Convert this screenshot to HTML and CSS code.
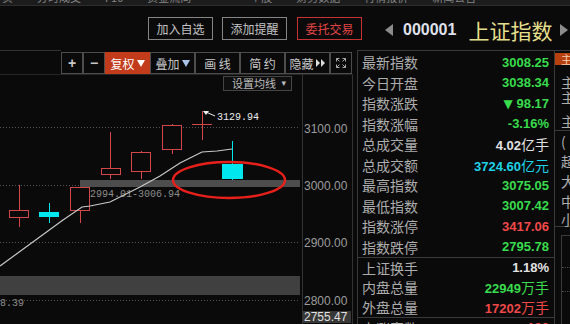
FILE: index.html
```html
<!DOCTYPE html>
<html>
<head>
    <meta charset="utf-8">
    <title>上证指数</title>
    <link rel="stylesheet" href="styles.css">
</head>
<body>
    <div class="topbar">
        <span>页</span>
        <span>分时成交</span>
        <span>F10</span>
        <span>资金流向</span>
        <span>·</span>
        <span>个股</span>
        <span>财务数据</span>
        <span>行情报价</span>
        <span>新闻公告</span>
    </div>

    <div class="header">
        <div class="btn">加入自选</div>
        <div class="btn">添加提醒</div>
        <div class="btn trade">委托交易</div>
        <div class="stock">
            <span class="arrow-left"></span>
            <span class="code">000001</span>
            <span class="name">上证指数</span>
            <span class="arrow-right"></span>
        </div>
    </div>

    <div class="main">
        <div class="chart">
            <div class="toolbar">
                <div class="toolbar-line"></div>
                <div class="tools">
                    <div class="tool sq">+</div>
                    <div class="tool sq">−</div>
                    <div class="tool active">复权
                        <svg width="8" height="7" viewBox="0 0 8 7"><polygon points="0,0 8,0 4,7" fill="#fff"/></svg>
                    </div>
                    <div class="tool">叠加
                        <svg width="8" height="7" viewBox="0 0 8 7"><polygon points="0,0 8,0 4,7" fill="#a9c3ea"/></svg>
                    </div>
                    <div class="tool">画 线</div>
                    <div class="tool">简 约</div>
                    <div class="tool">隐藏
                        <svg width="10" height="8" viewBox="0 0 10 8"><polygon points="0,0 4,4 0,8" fill="#ddd"/><polygon points="5,0 9,4 5,8" fill="#ddd"/></svg>
                    </div>
                    <div class="tool sq">
                        <svg width="12" height="12" viewBox="0 0 12 12" fill="none" stroke="#a8a8a8" stroke-width="1">
                            <path d="M1.5 4.5v-3h3M1.5 1.5l3 3"/>
                            <path d="M10.5 4.5v-3h-3M10.5 1.5l-3 3"/>
                            <path d="M1.5 7.5v3h3M1.5 10.5l3-3"/>
                            <path d="M10.5 7.5v3h-3M10.5 10.5l-3-3"/>
                        </svg>
                    </div>
                </div>
            </div>

            <div class="chart-body">
                <div class="plot">
                    <svg class="canvas" width="302" height="248" viewBox="0 76 302 248">
                        <g stroke="#555" stroke-dasharray="1 2">
                            <line x1="0" y1="128.5" x2="299" y2="128.5"/>
                            <line x1="0" y1="186.5" x2="299" y2="186.5"/>
                            <line x1="0" y1="243.5" x2="299" y2="243.5"/>
                            <line x1="0" y1="301.5" x2="299" y2="301.5"/>
                        </g>
                        <rect x="80" y="181" width="220" height="7" fill="#4d4d4d"/>
                        <rect x="0" y="277" width="300" height="19" fill="#404040"/>
                        <text x="90" y="198" class="mono" fill="#8c8c8c">2994.01-3006.94</text>
                        <text x="-18" y="307" class="mono" fill="#8c8c8c">2808.39</text>

                        <g stroke="#d24848" stroke-width="1" fill="#0a0a0a">
                            <line x1="19.5" y1="186" x2="19.5" y2="228"/>
                            <rect x="9.5" y="211.5" width="19" height="7"/>
                            <line x1="80.5" y1="188" x2="80.5" y2="224"/>
                            <rect x="70.5" y="188.5" width="19" height="23"/>
                            <line x1="110.5" y1="133" x2="110.5" y2="180"/>
                            <rect x="101.5" y="169.5" width="19" height="6"/>
                            <line x1="141.5" y1="152" x2="141.5" y2="180"/>
                            <rect x="131.5" y="153.5" width="19" height="19"/>
                            <line x1="172.5" y1="125" x2="172.5" y2="155"/>
                            <rect x="162.5" y="126.5" width="19" height="24"/>
                            <line x1="192" y1="125.5" x2="212" y2="125.5"/>
                            <line x1="202.5" y1="112" x2="202.5" y2="141"/>
                        </g>
                        <g stroke="#00e6ee" fill="#00e6ee">
                            <line x1="49.5" y1="204" x2="49.5" y2="224"/>
                            <rect x="39" y="213" width="20" height="5" stroke="none"/>
                            <line x1="232.5" y1="142" x2="232.5" y2="181"/>
                            <rect x="222" y="165" width="21" height="15" stroke="none"/>
                        </g>

                        <polyline fill="none" stroke="#c8c8c8" stroke-width="1.2"
                            points="0,267 63,221 82,208 90,207 110,203 140,188 160,177 180,164 190,159 202,153 217,152 232,150"/>

                        <ellipse cx="229" cy="181" rx="56" ry="18" fill="none" stroke="#e8201c" stroke-width="2.4"/>

                        <line x1="206" y1="113" x2="215" y2="117" stroke="#eee"/>
                        <polygon points="203,112 209,112 206,116" fill="#eee"/>
                        <text x="217" y="121" class="mono" fill="#ececec">3129.94</text>
                    </svg>
                    <div class="ma-select"><span>设置均线</span><span class="caret">▾</span></div>
                </div>

                <div class="axis">
                    <svg width="49" height="248" viewBox="0 76 49 248">
                        <g class="axis-text" fill="#9c9c9c">
                            <text x="1" y="134">3100.00</text>
                            <text x="1" y="191">3000.00</text>
                            <text x="1" y="248">2900.00</text>
                            <text x="1" y="306">2800.00</text>
                        </g>
                        <rect x="0" y="312" width="48" height="12" fill="#383838"/>
                        <text x="1" y="322" class="axis-text" fill="#e0e0e0">2755.47</text>
                    </svg>
                </div>
            </div>
        </div>

        <div class="quote">
            <div class="block first">
                <div class="row"><span class="label">最新指数</span><span class="val down">3008.25</span></div>
                <div class="row"><span class="label">今日开盘</span><span class="val down">3038.34</span></div>
                <div class="row"><span class="label">指数涨跌</span><span class="val down"><span class="tri">▼</span> 98.17</span></div>
                <div class="row"><span class="label">指数涨幅</span><span class="val down">-3.16%</span></div>
                <div class="row"><span class="label">总成交量</span><span class="val plain">4.02<span class="cn">亿手</span></span></div>
                <div class="row"><span class="label">总成交额</span><span class="val cyan">3724.60<span class="cn">亿元</span></span></div>
                <div class="row"><span class="label">最高指数</span><span class="val down">3075.05</span></div>
                <div class="row"><span class="label">最低指数</span><span class="val down">3007.42</span></div>
                <div class="row"><span class="label">指数涨停</span><span class="val up">3417.06</span></div>
                <div class="row"><span class="label">指数跌停</span><span class="val down">2795.78</span></div>
            </div>
            <div class="block second">
                <div class="row"><span class="label">上证换手</span><span class="val plain">1.18%</span></div>
                <div class="row"><span class="label">内盘总量</span><span class="val down">22949<span class="cn">万手</span></span></div>
                <div class="row"><span class="label">外盘总量</span><span class="val up">17202<span class="cn">万手</span></span></div>
            </div>
            <div class="block">
                <div class="row"><span class="label">上涨家数</span><span class="val up">198</span></div>
            </div>
        </div>

        <div class="side">
            <div class="tag">主</div>
            <div class="ch r1">主</div>
            <div class="ch r2">主</div>
            <div class="ch r3">主</div>
            <div class="ch">(</div>
            <div class="ch">超</div>
            <div class="ch">大</div>
            <div class="ch">中</div>
            <div class="ch r4">小</div>
            <div class="side-box">
                <div class="dots"></div>
                <div class="dots"></div>
            </div>
        </div>
    </div>
</body>
</html>
```

FILE: styles.css
```css
* {
    box-sizing: border-box;
}

body {
    margin: 0;
    width: 570px;
    height: 324px;
    overflow: hidden;
    background: #0a0a0a;
    color: #adadad;
    font-family: "Noto Sans CJK SC", "Liberation Sans", sans-serif;
}

/* cut-off tab strip at the very top */
.topbar {
    height: 6px;
    background: #1c1c1c;
    border-bottom: 1px solid #2e2e2e;
    overflow: hidden;
    display: flex;
    gap: 24px;
    padding-left: 2px;
}
.topbar span {
    font-size: 11px;
    line-height: 11px;
    margin-top: -8px;
    color: #858585;
    white-space: nowrap;
}

.header {
    height: 44px;
    display: flex;
    align-items: center;
    padding-left: 148px;
}
.btn {
    width: 65px;
    height: 23px;
    border: 1px solid #858585;
    color: #c4c4c4;
    font-size: 12px;
    display: flex;
    align-items: center;
    justify-content: center;
}
.btn + .btn {
    margin-left: 9px;
}
.btn.trade {
    margin-left: 10px;
    border-color: #c43434;
    color: #e04646;
}
.stock {
    display: flex;
    align-items: center;
    margin-left: 23px;
    padding-top: 3px;
}
.arrow-left {
    width: 0;
    height: 0;
    border-top: 6px solid transparent;
    border-bottom: 6px solid transparent;
    border-right: 8px solid #8c8c8c;
}
.arrow-right {
    width: 0;
    height: 0;
    margin-left: 8px;
    border-top: 6px solid transparent;
    border-bottom: 6px solid transparent;
    border-left: 8px solid #8c8c8c;
}
.code {
    margin-left: 10px;
    font-family: "Liberation Sans", sans-serif;
    font-weight: bold;
    font-size: 16px;
    color: #dfe0ea;
}
.name {
    margin-left: 12px;
    font-size: 21px;
    line-height: 24px;
    color: #e4df8c;
}

.main {
    display: flex;
    height: 274px;
}

/* chart column */
.chart {
    width: 353px;
    display: flex;
    flex-direction: column;
}
.toolbar {
    height: 25px;
    display: flex;
}
.toolbar-line {
    width: 61px;
    border-top: 1px solid #333;
}
.tools {
    display: flex;
    margin-top: 2px;
    height: 22px;
}
.tool {
    width: 45px;
    border: 1px solid #4c4c4c;
    color: #c8c8c8;
    font-size: 12px;
    display: flex;
    align-items: center;
    justify-content: center;
    gap: 2px;
}
.tool.sq {
    width: 22px;
    font-size: 14px;
    font-family: "Liberation Sans", sans-serif;
    font-weight: bold;
}
.tool.active {
    background: #c23b1b;
    border-color: #c23b1b;
    color: #fff;
}

.chart-body {
    flex: 1;
    display: flex;
    border-top: 1px solid #262626;
}
.plot {
    width: 302px;
    position: relative;
    display: flex;
    justify-content: flex-end;
    align-items: flex-start;
    padding: 1px 10px 0 0;
}
.canvas {
    position: absolute;
    left: 0;
    top: 0;
}
.mono {
    font-family: "Liberation Mono", monospace;
    font-size: 10px;
}
.ma-select {
    position: relative;
    width: 69px;
    height: 15px;
    border: 1px solid #454545;
    background: #0f0f0f;
    color: #bcbcbc;
    font-size: 11px;
    line-height: 1;
    display: flex;
    align-items: center;
    justify-content: space-between;
    padding: 0 5px 0 8px;
}
.caret {
    font-family: "DejaVu Sans", sans-serif;
    font-size: 9px;
}
.axis {
    width: 51px;
    border-left: 1px solid #333;
    border-right: 1px solid #333;
}
.axis-text {
    font-family: "Liberation Sans", sans-serif;
    font-size: 12px;
}

/* quote table */
.quote {
    width: 197px;
    margin-left: 4px;
    border-left: 1px solid #3a3a3a;
    border-top: 1px solid #3a3a3a;
}
.block {
    border-bottom: 1px solid #3a3a3a;
}
.block.first {
    padding-top: 1px;
}
.row {
    height: 20.5px;
    display: flex;
    justify-content: space-between;
    align-items: center;
    padding: 0 5px 0 4px;
}
.second .row {
    height: 19.5px;
}
.label {
    font-size: 14px;
    color: #adadad;
}
.val {
    font-family: "Liberation Sans", sans-serif;
    font-weight: bold;
    font-size: 13px;
}
.val .cn {
    font-family: "Noto Sans CJK SC", sans-serif;
    font-weight: normal;
    font-size: 14px;
}
.tri {
    font-family: "DejaVu Sans", sans-serif;
    font-size: 12px;
}
.up {
    color: #f04848;
}
.down {
    color: #38dc4c;
}
.cyan {
    color: #1ed2e8;
}
.plain {
    color: #e2e2e2;
}

/* clipped column on the right edge */
.side {
    flex: 1;
    border-left: 1px solid #3a3a3a;
    border-top: 1px solid #3a3a3a;
    overflow: hidden;
    display: flex;
    flex-direction: column;
}
.tag {
    margin-top: 2px;
    height: 12px;
    background: #b8400f;
    color: #f4cdb2;
    font-size: 11px;
    line-height: 12px;
    padding-left: 6px;
}
.ch {
    height: 20px;
    line-height: 20px;
    font-size: 14px;
    padding-left: 6px;
    color: #adadad;
    white-space: nowrap;
}
.ch.r1 {
    margin-top: 10px;
    height: 15px;
    line-height: 15px;
}
.ch.r2 {
    height: 15px;
    line-height: 15px;
}
.ch.r3 {
    margin-top: 6px;
    border-bottom: 1px solid #3a3a3a;
}
.ch.r4 {
    height: 16px;
    line-height: 16px;
    border-bottom: 1px solid #3a3a3a;
}
.side-box {
    flex: 1;
    margin: 8px 0 0 6px;
    border-top: 1px solid #3a3a3a;
    border-left: 1px solid #3a3a3a;
    padding-top: 31px;
}
.dots {
    height: 24px;
    border-top: 1px dotted #444;
}
```
